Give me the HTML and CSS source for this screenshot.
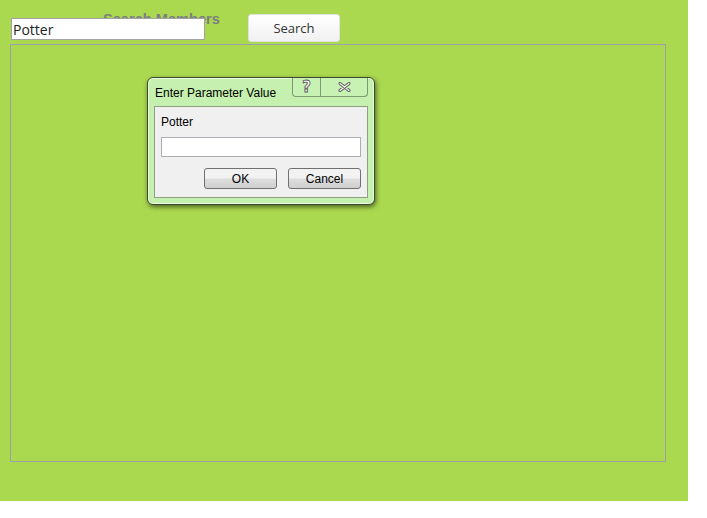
FILE: index.html
```html
<!DOCTYPE html>
<html lang="en">
<head>
  <meta charset="UTF-8" />
  <title>Search Members</title>
  <link rel="stylesheet" href="styles.css">
</head>
<body>
  <div class="page">
    <div class="toolbar">
      <span class="caption">Search Members</span>
      <input class="search-box" type="text" value="Potter">
      <button class="search-btn">Search</button>
    </div>
    <div class="results">
      <div class="dialog">
        <div class="dialog-title">
          <span>Enter Parameter Value</span>
          <div class="title-btns">
            <span class="tbtn help">?</span>
            <span class="tbtn close">
              <svg width="13" height="10" viewBox="0 0 13 10"><path d="M2 1.5 L11 8.5 M11 1.5 L2 8.5" stroke="#5a5a5a" stroke-width="3" stroke-linecap="round" fill="none"/><path d="M2 1.5 L11 8.5 M11 1.5 L2 8.5" stroke="#f4f4f4" stroke-width="1.2" stroke-linecap="round" fill="none"/></svg>
            </span>
          </div>
        </div>
        <div class="dialog-body">
          <div class="prompt">Potter</div>
          <input class="param" type="text">
          <div class="actions">
            <button class="win-btn">OK</button>
            <button class="win-btn">Cancel</button>
          </div>
        </div>
      </div>
    </div>
  </div>
</body>
</html>
```

FILE: styles.css
```css
body {
  margin: 0;
  background: #fff;
  font-family: "Open Sans", sans-serif;
}

.page {
  width: 688px;
  height: 501px;
  background: #aad94f;
  padding: 14px 0 0 10px;
  box-sizing: border-box;
}

.toolbar {
  position: relative;
  display: flex;
  align-items: flex-start;
  height: 30px;
}

.caption {
  position: absolute;
  left: 93px;
  top: -3px;
  font-family: "Liberation Sans", sans-serif;
  font-weight: bold;
  font-size: 14.6px;
  color: #7b8080;
}

.search-box {
  position: relative;
  margin: 4px 0 0 1px;
  width: 194px;
  height: 22px;
  box-sizing: border-box;
  border: 1px solid #a3a3a3;
  background: #fff;
  font-family: "Open Sans", sans-serif;
  font-size: 14px;
  color: #222;
  padding: 0 1px;
  outline: none;
}

.search-btn {
  margin-left: 43px;
  width: 92px;
  height: 28px;
  border: 1px solid #e2e2e2;
  border-radius: 3px;
  background: linear-gradient(#ffffff, #f1f1f1);
  font-family: "Open Sans", sans-serif;
  font-size: 13px;
  color: #333;
}

.results {
  position: relative;
  width: 656px;
  height: 418px;
  box-sizing: border-box;
  border: 1px solid #a0a0a8;
}

.dialog {
  position: absolute;
  left: 136px;
  top: 32px;
  width: 228px;
  height: 128px;
  box-sizing: border-box;
  background: #c6f0b0;
  border: 1px solid #3c4a30;
  border-radius: 6px;
  box-shadow: 1px 2px 5px rgba(0,0,0,0.55), inset 0 0 0 1px #e8fbdc;
  font-family: "Liberation Sans", sans-serif;
  font-size: 12px;
  color: #000;
}

.dialog-title {
  display: flex;
  justify-content: space-between;
  height: 28px;
  padding-left: 7px;
}

.dialog-title > span {
  padding-top: 8px;
}

.title-btns {
  display: flex;
  margin-right: 6px;
}

.tbtn {
  display: flex;
  justify-content: center;
  align-items: center;
  height: 18px;
  border: 1px solid #7c9a70;
  border-top: none;
  background: #c8f2b4;
}

.help {
  width: 27px;
  border-radius: 0 0 0 4px;
  font-family: "DejaVu Sans", sans-serif;
  font-weight: bold;
  font-size: 15px;
  color: #f4f4f4;
  -webkit-text-stroke: 0.8px #555;
}

.close {
  width: 46px;
  border-left: none;
  border-radius: 0 0 4px 0;
}

.dialog-body {
  margin: 0 6px;
  height: 92px;
  box-sizing: border-box;
  background: #f0f0f0;
  border: 1px solid #8da083;
  padding: 8px 6px 0 6px;
}

.prompt {
  height: 22px;
}

.param {
  display: block;
  width: 200px;
  height: 20px;
  box-sizing: border-box;
  border: 1px solid #abadb3;
  background: #fff;
  margin: 0;
}

.actions {
  display: flex;
  justify-content: flex-end;
  gap: 11px;
  margin-top: 11px;
}

.win-btn {
  width: 73px;
  height: 21px;
  border: 1px solid #707070;
  border-radius: 3px;
  background: linear-gradient(#f2f2f2 45%, #dddddd 55%, #cfcfcf);
  font-family: "Liberation Sans", sans-serif;
  font-size: 12px;
  color: #000;
  padding: 0;
}
```
